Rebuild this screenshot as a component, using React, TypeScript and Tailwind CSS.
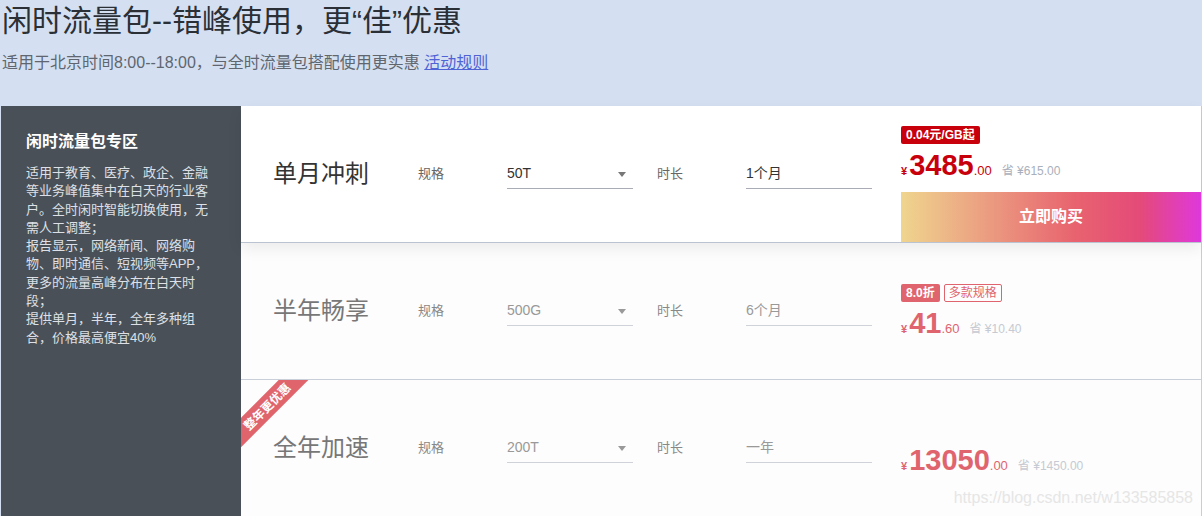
import React from "react";

type Plan = {
  name: string;
  spec: string;
  duration: string;
  active?: boolean;
  ribbon?: string;
  badges: { text: string; solid: boolean }[];
  price: string;
  cents: string;
  save: string;
};

const PLANS: Plan[] = [
  {
    name: "单月冲刺",
    spec: "50T",
    duration: "1个月",
    active: true,
    badges: [{ text: "0.04元/GB起", solid: true }],
    price: "3485",
    cents: ".00",
    save: "¥615.00",
  },
  {
    name: "半年畅享",
    spec: "500G",
    duration: "6个月",
    badges: [
      { text: "8.0折", solid: true },
      { text: "多款规格", solid: false },
    ],
    price: "41",
    cents: ".60",
    save: "¥10.40",
  },
  {
    name: "全年加速",
    spec: "200T",
    duration: "一年",
    ribbon: "整年更优惠",
    badges: [],
    price: "13050",
    cents: ".00",
    save: "¥1450.00",
  },
];

const INTRO = [
  "适用于教育、医疗、政企、金融",
  "等业务峰值集中在白天的行业客",
  "户。全时闲时智能切换使用，无",
  "需人工调整；",
  "报告显示，网络新闻、网络购",
  "物、即时通信、短视频等APP，",
  "更多的流量高峰分布在白天时",
  "段；",
  "提供单月，半年，全年多种组",
  "合，价格最高便宜40%",
];

function PlanRow({ plan }: { plan: Plan }) {
  const a = plan.active;
  return (
    <div
      className={`relative flex h-[137px] border-b ${
        a
          ? "z-10 border-[#b9c3d1] bg-white shadow-[0_6px_14px_rgba(0,0,0,0.07)]"
          : "border-[#c9cfd9] bg-[#fdfdfd]"
      }`}
    >
      {/* Corner ribbon */}
      {plan.ribbon && (
        <div className="absolute left-0 top-0 h-[80px] w-[80px] overflow-hidden">
          <div className="absolute left-[-34px] top-[16px] flex h-[21px] w-[120px] -rotate-45 items-center justify-center bg-[#e0646c] text-[12px] font-bold text-white">
            {plan.ribbon}
          </div>
        </div>
      )}

      {/* Options */}
      <div className="flex flex-1 items-center pl-8">
        <div className={`w-[145px] text-[24px] ${a ? "text-[#333]" : "text-[#777]"}`}>{plan.name}</div>
        <div className={`w-[89px] text-[13px] ${a ? "text-[#666]" : "text-[#888]"}`}>规格</div>
        <div
          className={`relative flex h-[30px] w-[126px] items-center border-b text-[14px] ${
            a ? "border-[#a9abb5] text-[#333]" : "border-[#cfd2d9] text-[#999]"
          }`}
        >
          {plan.spec}
          <svg className="absolute right-[7px] top-[13px]" width="8" height="5" viewBox="0 0 8 5">
            <path d="M0 0h8L4 5z" fill={a ? "#777" : "#999"} />
          </svg>
        </div>
        <div className={`ml-6 w-[89px] text-[13px] ${a ? "text-[#666]" : "text-[#888]"}`}>时长</div>
        <div
          className={`flex h-[30px] w-[126px] items-center border-b text-[14px] ${
            a ? "border-[#a9abb5] text-[#333]" : "border-[#cfd2d9] text-[#999]"
          }`}
        >
          {plan.duration}
        </div>
      </div>

      {/* Price */}
      <div className={`flex w-[300px] flex-col ${a ? "pt-5" : "justify-center pt-[2px]"}`}>
        <div className="flex h-[18px] gap-1">
          {plan.badges.map((b) =>
            b.solid ? (
              <span
                key={b.text}
                className={`flex items-center rounded-[2px] px-[5px] text-[12px] font-bold text-white ${
                  a ? "bg-[#c8000c]" : "bg-[#e0646e]"
                }`}
              >
                {b.text}
              </span>
            ) : (
              <span
                key={b.text}
                className="flex items-center rounded-[2px] border border-[#e0646e] px-[4px] text-[12px] text-[#e0646e]"
              >
                {b.text}
              </span>
            )
          )}
        </div>
        <div className={`mt-[4px] flex h-[34px] items-baseline ${a ? "text-[#c8000c]" : "text-[#e0646e]"}`}>
          <span className="text-[11px] font-bold">¥</span>
          <span className="ml-[2px] text-[29px] font-bold leading-[34px]">{plan.price}</span>
          <span className="text-[13px]">{plan.cents}</span>
          <span className={`ml-[10px] text-[12px] ${a ? "text-[#a9b0bb]" : "text-[#c6cad2]"}`}>省 {plan.save}</span>
        </div>
        {a && (
          <button className="mt-auto flex h-[50px] w-full items-center justify-center bg-[linear-gradient(90deg,#efd58e_0%,#eb9a80_30%,#e8636f_58%,#e44a79_80%,#df38dc_100%)] text-[16px] font-bold text-white">
            立即购买
          </button>
        )}
      </div>
    </div>
  );
}

export default function App() {
  return (
    <div
      className="relative h-[516px] w-[1202px] overflow-hidden bg-[#d4e0f1]"
      style={{ fontFamily: '"Liberation Sans", "Noto Sans CJK SC", sans-serif' }}
    >
      {/* Heading */}
      <h1 className="pl-[2px] text-[30px] leading-[42px] text-[#2b2f36]">闲时流量包--错峰使用，更“佳”优惠</h1>
      <p className="mt-[9px] pl-[2px] text-[16px] leading-[24px] text-[#5f6670]">
        适用于北京时间8:00--18:00，与全时流量包搭配使用更实惠{" "}
        <a className="text-[#4f62d6] underline">活动规则</a>
      </p>

      {/* Card */}
      <div className="ml-[1px] mt-[31px] flex w-[1201px] border-r border-[#c6cedb] bg-white">
        <div className="w-[240px] shrink-0 bg-[#4a5058] pl-[25px] pt-6">
          <div className="text-[16px] font-bold leading-[24px] text-white">闲时流量包专区</div>
          <div className="mt-[10px] text-[13px] leading-[18.3px] text-[#dde0e6]">
            {INTRO.map((l) => (
              <div key={l} className="whitespace-nowrap">
                {l}
              </div>
            ))}
          </div>
        </div>
        <div className="flex-1">
          {PLANS.map((p) => (
            <PlanRow key={p.name} plan={p} />
          ))}
        </div>
      </div>

      {/* Watermark */}
      <div className="absolute right-[9px] top-[486px] text-[16px] text-[#e6e6e6]">https://blog.csdn.net/w133585858</div>
    </div>
  );
}
